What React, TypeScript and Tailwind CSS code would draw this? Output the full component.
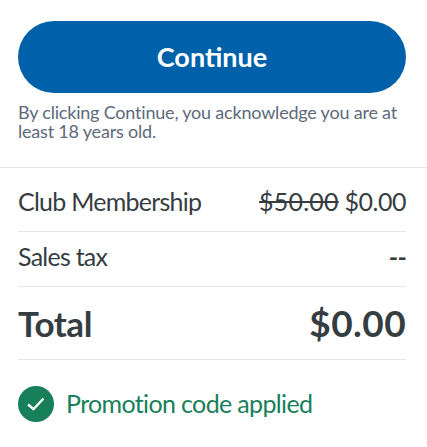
export default function App() {
  return (
    <div className="w-[427px] h-[447px] overflow-hidden bg-white font-['Lato',sans-serif]">
      <div className="pl-[18px] pr-[21px] pt-[21px] pb-[26px] border-b border-[#e3e6e8]">
        <button className="w-[388px] h-[72px] pb-[2px] rounded-full bg-[#0061ab] text-white text-[27px] leading-none font-bold">
          Continue
        </button>
        <p className="mt-[10px] text-[18px] leading-[19px] tracking-[-0.2px] text-[#5d6a7b]">
          By clicking Continue, you acknowledge you are at least 18 years old.
        </p>
      </div>
      <div className="pl-[18px] pr-[21px] text-[#363d42]">
        <div className="flex items-center justify-between h-[64px] pt-[5px] border-b border-[#e1e6e6] text-[25px] tracking-[-0.75px]">
          <span>Club Membership</span>
          <span className="tracking-[-0.5px]">
            <span className="line-through tracking-[0.2px]">$50.00</span> $0.00
          </span>
        </div>
        <div className="flex items-center justify-between h-[55px] pb-[4px] border-b border-[#e1e6e6] text-[25px] tracking-[-0.75px]">
          <span>Sales tax</span>
          <span className="font-bold">--</span>
        </div>
        <div className="flex items-center justify-between h-[73px] border-b border-[#e1e6e6] text-[35px] font-bold">
          <span className="tracking-[-0.4px]">Total</span>
          <span className="text-[37px] tracking-[0.4px]">$0.00</span>
        </div>
        <div className="flex items-center gap-[12px] mt-[25px] text-[25px] tracking-[-0.65px] text-[#17805a]">
          <svg width="36" height="36" viewBox="0 0 36 36" className="shrink-0">
            <circle cx="18" cy="18" r="18" fill="#17805a" />
            <path d="M10 18.5l5.5 4.7L25.5 12.5" fill="none" stroke="#fff" strokeWidth="2.4" />
          </svg>
          <span>Promotion code applied</span>
        </div>
      </div>
    </div>
  )
}
